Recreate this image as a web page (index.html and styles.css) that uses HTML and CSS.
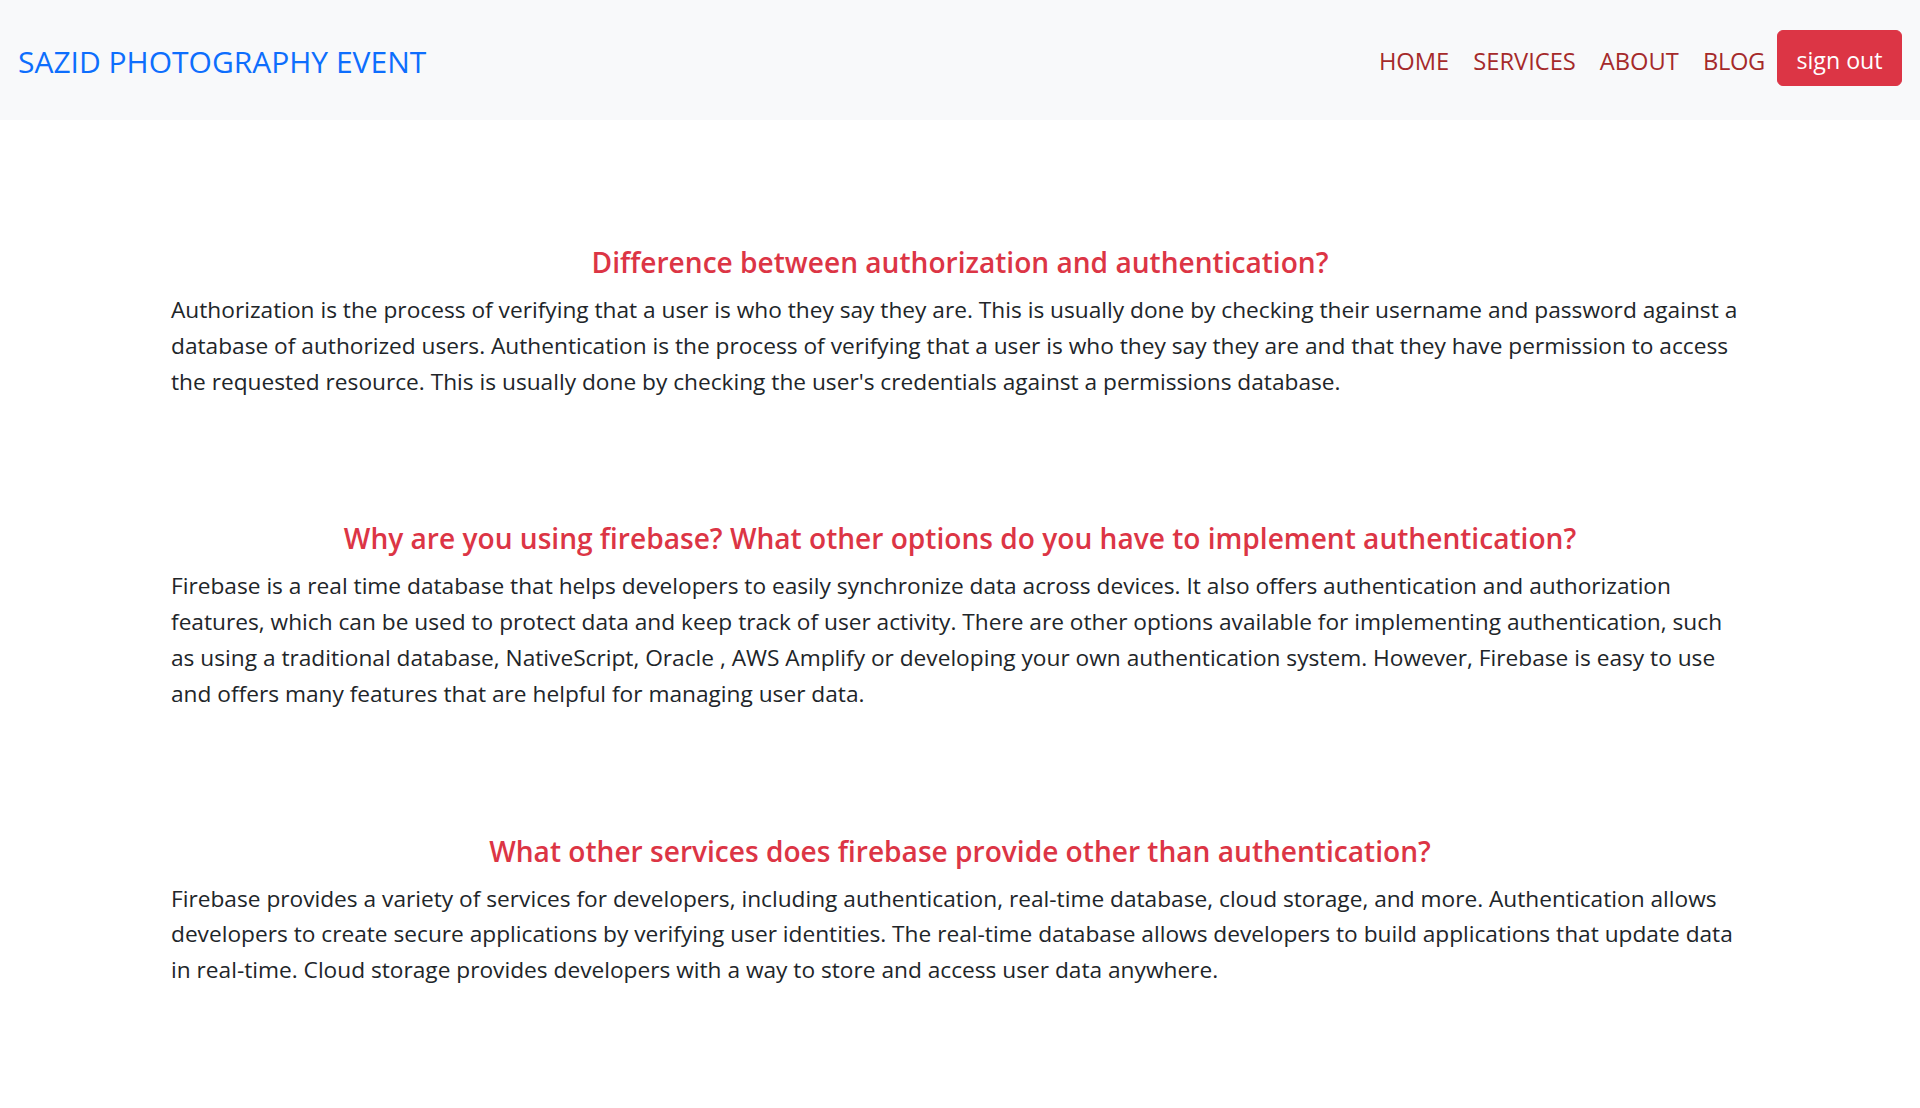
FILE: index.html
```html
<!DOCTYPE html>
<html lang="en">
<head>
<meta charset="utf-8">
<title>Sazid Photography Event - Blog</title>
<link rel="stylesheet" href="styles.css">
</head>
<body>
<header class="navbar">
  <a class="brand" href="#">SAZID PHOTOGRAPHY EVENT</a>
  <nav class="nav">
    <a class="nav-link" href="#">HOME</a>
    <a class="nav-link" href="#">SERVICES</a>
    <a class="nav-link" href="#">ABOUT</a>
    <a class="nav-link" href="#">BLOG</a>
    <button class="btn-signout" type="button">sign out</button>
  </nav>
</header>
<main class="blog">
  <section class="qa">
    <h3 class="qa-title">Difference between authorization and authentication?</h3>
    <p class="qa-text">Authorization is the process of verifying that a user is who they say they are. This is usually done by checking their username and password against a database of authorized users. Authentication is the process of verifying that a user is who they say they are and that they have permission to access the requested resource. This is usually done by checking the user's credentials against a permissions database.</p>
  </section>
  <section class="qa">
    <h3 class="qa-title">Why are you using firebase? What other options do you have to implement authentication?</h3>
    <p class="qa-text">Firebase is a real time database that helps developers to easily synchronize data across devices. It also offers authentication and authorization features, which can be used to protect data and keep track of user activity. There are other options available for implementing authentication, such as using a traditional database, NativeScript, Oracle , AWS Amplify or developing your own authentication system. However, Firebase is easy to use and offers many features that are helpful for managing user data.</p>
  </section>
  <section class="qa">
    <h3 class="qa-title">What other services does firebase provide other than authentication?</h3>
    <p class="qa-text">Firebase provides a variety of services for developers, including authentication, real-time database, cloud storage, and more. Authentication allows developers to create secure applications by verifying user identities. The real-time database allows developers to build applications that update data in real-time. Cloud storage provides developers with a way to store and access user data anywhere.</p>
  </section>
</main>
</body>
</html>
```
FILE: styles.css
```css
* { box-sizing: border-box; }
html, body { margin: 0; padding: 0; }
body {
  font-family: "Open Sans", "Noto Sans", sans-serif;
  color: #212529;
  background: #fff;
}
.navbar {
  height: 120px;
  background: #f8f9fa;
  display: flex;
  align-items: center;
  justify-content: space-between;
  padding: 0 18px 0 18px;
}
.brand {
  color: #0d6efd;
  text-decoration: none;
  font-size: 30px;
  font-weight: 400;
  margin-top: 2px;
}
.nav {
  display: flex;
  align-items: center;
}
.nav-link {
  color: #a52a2a;
  text-decoration: none;
  font-size: 23.7px;
  padding: 0 12px;
  margin-top: 2px;
}
.nav-link:last-of-type {
  letter-spacing: -0.3px;
  padding-right: 11px;
}
.btn-signout {
  font-family: inherit;
  font-size: 23.2px;
  color: #fff;
  background: #dc3545;
  border: 1px solid #dc3545;
  border-radius: 6px;
  height: 56px;
  width: 125px;
  margin-left: 1px;
  margin-top: -4px;
  padding: 5px 0 0 0;
  line-height: 1;
  cursor: pointer;
}
.blog {
  padding: 3px 171px 60px;
}
.qa {
  margin-top: 123px;
}
.qa-title {
  color: #dc3545;
  font-size: 28.1px;
  font-weight: 600;
  line-height: 32px;
  text-align: center;
  margin: 0 0 14px;
}
.qa-text {
  font-size: 22.7px;
  line-height: 35.8px;
  margin: 0;
}
```
